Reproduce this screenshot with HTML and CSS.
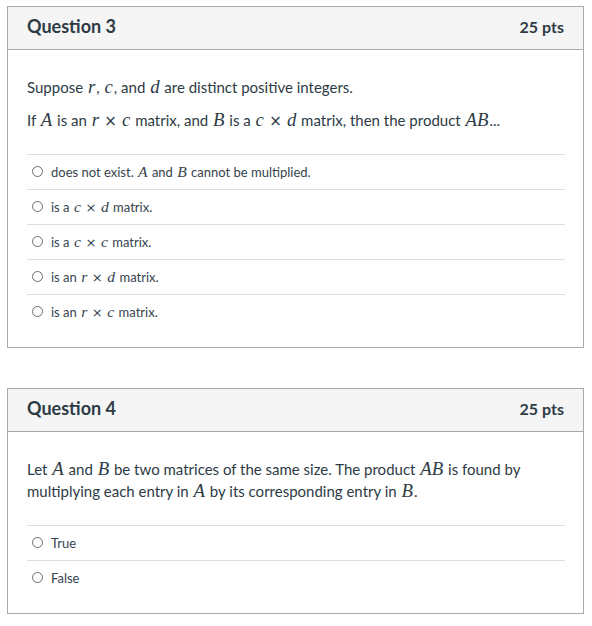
FILE: index.html
```html
<!DOCTYPE html>
<html>
<head>
<meta charset="utf-8">
<link rel="stylesheet" href="styles.css">
</head>
<body>
<div class="question">
  <div class="q-header">
    <span class="q-title">Question 3</span>
    <span class="q-pts">25 pts</span>
  </div>
  <div class="q-body">
    <p class="q-text">Suppose <span class="m">r</span>, <span class="m">c</span>, and <span class="m">d</span> are distinct positive integers.</p>
    <p class="q-text">If <span class="m">A</span> is an <span class="m">r</span><span class="op">×</span><span class="m">c</span> matrix, and <span class="m">B</span> is a <span class="m">c</span><span class="op">×</span><span class="m">d</span> matrix, then the product <span class="m">AB</span>...</p>
    <div class="answers">
      <label class="answer"><span class="radio"></span><span class="a-text">does not exist. <span class="m">A</span> and <span class="m">B</span> cannot be multiplied.</span></label>
      <label class="answer"><span class="radio"></span><span class="a-text">is a <span class="m">c</span><span class="op">×</span><span class="m">d</span> matrix.</span></label>
      <label class="answer"><span class="radio"></span><span class="a-text">is a <span class="m">c</span><span class="op">×</span><span class="m">c</span> matrix.</span></label>
      <label class="answer"><span class="radio"></span><span class="a-text">is an <span class="m">r</span><span class="op">×</span><span class="m">d</span> matrix.</span></label>
      <label class="answer"><span class="radio"></span><span class="a-text">is an <span class="m">r</span><span class="op">×</span><span class="m">c</span> matrix.</span></label>
    </div>
  </div>
</div>

<div class="question">
  <div class="q-header">
    <span class="q-title">Question 4</span>
    <span class="q-pts">25 pts</span>
  </div>
  <div class="q-body">
    <p class="q-text">Let <span class="m">A</span> and <span class="m">B</span> be two matrices of the same size. The product <span class="m">AB</span> is found by multiplying each entry in <span class="m">A</span> by its corresponding entry in <span class="m">B</span>.</p>
    <div class="answers">
      <label class="answer"><span class="radio"></span><span class="a-text">True</span></label>
      <label class="answer"><span class="radio"></span><span class="a-text">False</span></label>
    </div>
  </div>
</div>
</body>
</html>
```
FILE: styles.css
```css
* { box-sizing: border-box; }
body {
  margin: 6px 0 0 7px;
  width: 577px;
  font-family: "Lato", "Open Sans", sans-serif;
  color: #2d3b45;
  background: #fff;
}
.question {
  border: 1px solid #aaaaaa;
  margin-bottom: 40px;
}
.q-header {
  height: 43px;
  background: #f5f5f5;
  border-bottom: 1px solid #aaaaaa;
  display: flex;
  justify-content: space-between;
  align-items: center;
  padding: 0 19px 4px 19px;
}
.q-title {
  font-size: 18px;
  font-weight: 700;
}
.q-pts {
  font-size: 16px;
  font-weight: 700;
  padding-top: 1px;
}
.q-body {
  padding: 26px 18px 18px 19px;
}
.q-text {
  margin: 0 0 11px 0;
  font-size: 15px;
  line-height: 22px;
}
.m {
  font-family: "Liberation Serif", "DejaVu Serif", serif;
  font-style: italic;
  font-size: 1.25em;
  line-height: 1;
  padding: 0 1px;
}
.op {
  font-family: "DejaVu Sans", "Liberation Sans", sans-serif;
  font-size: 1em;
  line-height: 1;
  padding: 0 0.28em;
}
.answers {
  margin-top: 23px;
}
.answer {
  display: flex;
  align-items: center;
  height: 35px;
  border-top: 1px solid #dddddd;
  padding-left: 5px;
  padding-bottom: 1px;
  font-size: 13px;
}
.radio {
  width: 11px;
  height: 11px;
  border: 1px solid #6b6b6b;
  border-radius: 50%;
  margin-right: 8px;
  flex: none;
}
.a-text {
  line-height: 20px;
  color: #34434d;
}
.a-text .m { font-size: 1.2em; }
```
